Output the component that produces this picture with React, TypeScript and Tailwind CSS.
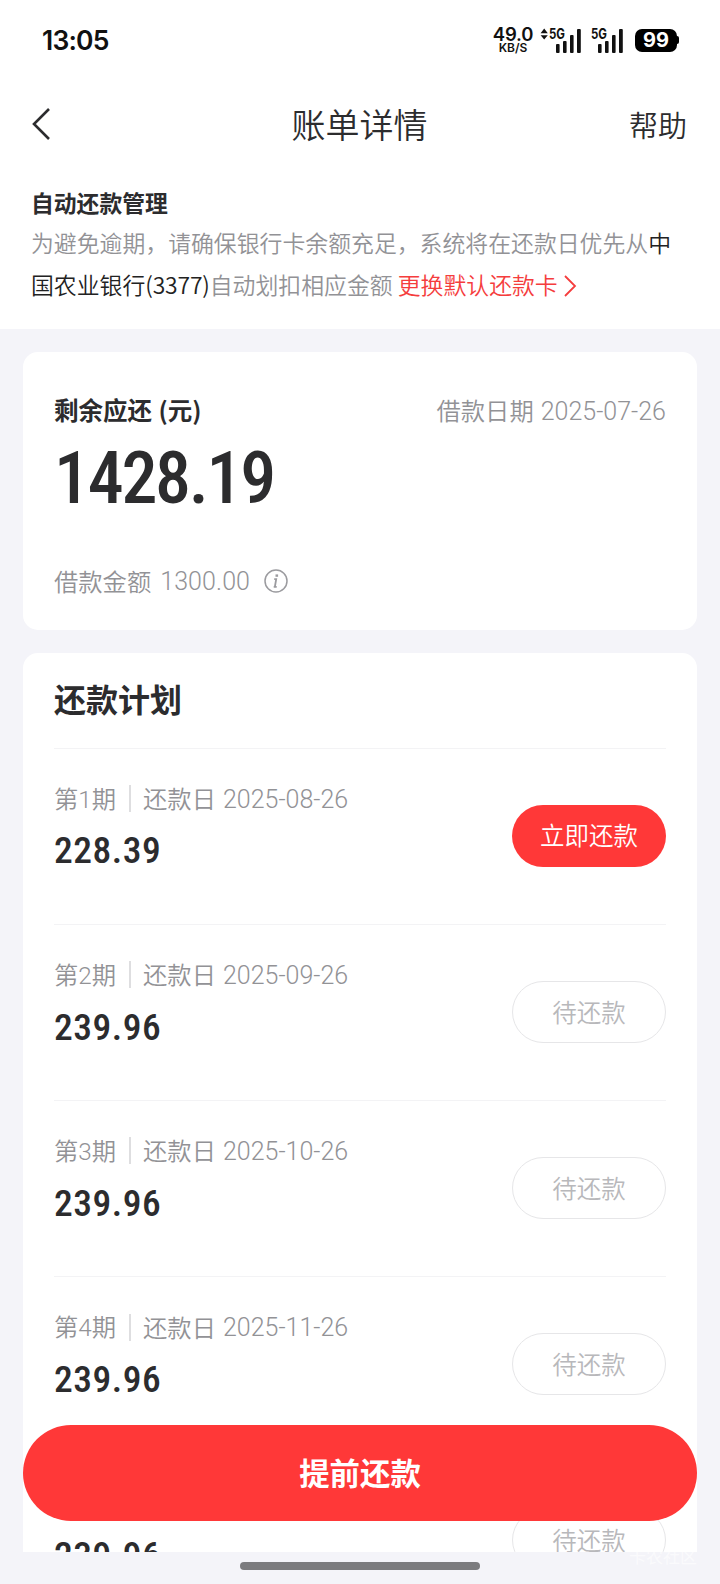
import React from "react";

type Installment = { term: number; date: string; amount: string; due: boolean };

const installments: Installment[] = [
  { term: 1, date: "2025-08-26", amount: "228.39", due: true },
  { term: 2, date: "2025-09-26", amount: "239.96", due: false },
  { term: 3, date: "2025-10-26", amount: "239.96", due: false },
  { term: 4, date: "2025-11-26", amount: "239.96", due: false },
  { term: 5, date: "2025-12-26", amount: "239.96", due: false },
];

function Signal({ active }: { active?: boolean }) {
  return (
    <svg className="h-[26px] w-[42px] shrink-0 overflow-visible" viewBox="0 0 42 26" fill="#111">
      {active && <path d="M0.6 6.2 4.2 1.6 7.8 6.2ZM0.6 8.2h7.2L4.2 12.6Z" />}
      <text x="9" y="11.6" fontSize="14.5" fontWeight="700" fontFamily="Inter, sans-serif" textLength="16" lengthAdjust="spacingAndGlyphs">5G</text>
      <rect x="16" y="17" width="3.6" height="9" rx="1" />
      <rect x="23" y="14" width="3.6" height="12" rx="1" />
      <rect x="30" y="8" width="3.6" height="18" rx="1" />
      <rect x="37" y="2" width="3.8" height="24" rx="1" />
    </svg>
  );
}

function StatusBar() {
  return (
    <div className="flex h-20 shrink-0 items-center pl-[42px] pr-[41px] text-[#111]">
      <div className="font-[Inter] text-[26.5px] leading-none font-semibold tracking-[-0.8px]">13:05</div>
      <div className="ml-auto flex items-center">
        <div className="flex w-10 flex-col items-center font-[Inter] font-semibold">
          <span className="text-[18.5px] leading-[14px] tracking-[-0.2px]">49.0</span>
          <span className="mt-px text-[12px] leading-[11px]">KB/S</span>
        </div>
        <div className="ml-[7px] flex">
          <Signal active />
          <Signal />
        </div>
        <div className="ml-[11px] flex items-center">
          <div className="flex h-[23px] w-[42px] items-center justify-center rounded-[7px] bg-black font-[Inter] text-[20px] leading-none font-bold text-white">99</div>
          <div className="h-2 w-0.5 rounded-r bg-black" />
        </div>
      </div>
    </div>
  );
}

function InstallmentRow({ term, date, amount, due }: Installment) {
  return (
    <div className="flex h-[176.2px] shrink-0 justify-between border-t border-[#f3f3f5]">
      <div className="flex flex-col pt-8">
        <div className="flex h-9 items-center text-[24.3px] leading-9 font-[350] text-[#929296]">
          <span>第<span className="font-[Roboto] font-light">{term}</span>期</span>
          <span className="mr-3 ml-[13px] h-[27px] w-0.5 bg-[#dedee0]" />
          <span className="pb-px">还款日</span>
          <span className="ml-[7px] pt-0.5 font-[Roboto] text-[25px] font-light">{date}</span>
        </div>
        <div className="mt-[11.8px] font-[Roboto] text-[37.5px] leading-[44px] font-medium tracking-[0.5px] text-[#2c2c2e] [font-stretch:85%]">{amount}</div>
      </div>
      {due ? (
        <button className="mt-14 h-[62px] w-[154px] rounded-full bg-[#ff3838] text-[24.5px] leading-none font-[350] text-white">立即还款</button>
      ) : (
        <button className="mt-14 h-[62px] w-[154px] rounded-full border border-[#e6e6e8] text-[24.5px] leading-none font-[350] text-[#b8b8bb]">待还款</button>
      )}
    </div>
  );
}

export default function App() {
  return (
    <div className="relative flex h-[1584px] w-[720px] flex-col overflow-hidden bg-[#f4f4f9] font-['Noto_Sans_CJK_SC',sans-serif] text-[#2c2c2e]">
      <header className="flex h-[329px] shrink-0 flex-col bg-white">
        <StatusBar />
        <nav className="grid h-[88px] grid-cols-3 items-center pr-[33px] pl-8">
          <svg className="h-8 w-5" viewBox="0 0 20 32" fill="none" stroke="#2c2c2e" strokeWidth="2.6">
            <path d="M17 1 2 16l15 15" />
          </svg>
          <h1 className="text-center text-[34px] leading-none font-[350]">账单详情</h1>
          <span className="text-right text-[29px] leading-none font-[350]">帮助</span>
        </nav>
        <section className="pl-[31px]">
          <h2 className="mt-[18px] text-[22.8px] leading-[34px] font-bold">自动还款管理</h2>
          <p className="mt-px w-[660px] text-[22.87px] leading-[42px] font-[350] text-[#929296]">
            为避免逾期，请确保银行卡余额充足，系统将在还款日优先从<span className="text-[#222]">中<br />国农业银行<span className="tracking-[-0.15px]">(3377)</span></span>自动划扣相应金额{" "}
            <a className="text-[#f53d3d]">更换默认还款卡<svg className="ml-[5px] inline h-[22px] w-3.5 align-[-3px]" viewBox="0 0 14 22" fill="none" stroke="currentColor" strokeWidth="1.8"><path d="m2 1 10 10L2 21" /></svg></a>
          </p>
        </section>
      </header>

      <main className="flex min-h-0 flex-col gap-[23px] px-[23px] pt-[23px]">
        <section className="flex h-[278px] shrink-0 flex-col rounded-[15px] bg-white px-[31px] pt-10">
          <div className="flex items-center justify-between">
            <h2 className="-mt-0.5 text-[24.5px] leading-9 font-bold">剩余应还 <span className="ml-px">(元)</span></h2>
            <p className="flex text-[24.3px] leading-9 font-[350] text-[#929296]">借款日期<span className="ml-[7px] pt-0.5 font-[Roboto] text-[25px] font-light">2025-07-26</span></p>
          </div>
          <div className="mt-[7px] font-[Roboto] text-[72px] leading-[84px] font-medium tracking-[-2.3px] [font-stretch:85%]">1428.19</div>
          <div className="mt-[41px] flex items-center text-[24.3px] leading-9 font-[350] text-[#929296]">
            借款金额 <span className="ml-[9px] pt-0.5 font-[Roboto] text-[25px] font-light tracking-[0.1px]">1300.00</span>
            <svg className="ml-3.5 size-6" viewBox="0 0 24 24" fill="none" stroke="#9b9b9f" strokeWidth="1.5">
              <circle cx="12" cy="12" r="11" />
              <path d="M12.8 5.4v2.4" strokeWidth="2.6" />
              <path d="M10.2 10.2h2L10.9 17.6M9.7 17.8h3" strokeWidth="1.8" />
            </svg>
          </div>
        </section>

        <section className="flex h-[899px] shrink-0 flex-col overflow-hidden rounded-t-[15px] bg-white px-[31px]">
          <h2 className="h-[94.6px] shrink-0 text-[32px] leading-[91px] font-bold">还款计划</h2>
          {installments.map((item) => <InstallmentRow key={item.term} {...item} />)}
        </section>
      </main>

      <button className="absolute top-[1425px] left-[23px] h-24 w-[674px] rounded-full bg-[#ff3838] pb-0.5 text-[30.4px] leading-none font-bold text-white">提前还款</button>
      <span className="absolute top-[1546px] left-[629px] text-[17px] leading-5 text-white/60">卡农社区</span>
      <div className="absolute top-[1562px] left-60 h-2 w-60 rounded-full bg-[#7b7b7e]" />
    </div>
  );
}
